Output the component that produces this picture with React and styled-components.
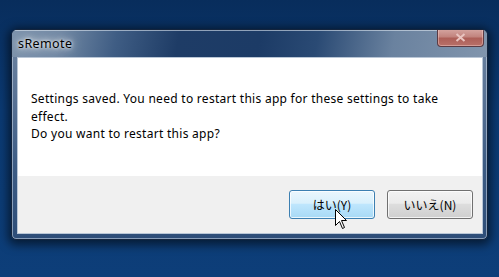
import React from "react";
import styled, { createGlobalStyle } from "styled-components";

const GlobalStyle = createGlobalStyle`
  html, body {
    margin: 0;
    height: 100%;
  }
  body {
    background: linear-gradient(180deg, #082d5c 0%, #0b3a73 40%, #0d3e79 100%);
    font-family: "Noto Sans", "Noto Sans CJK JP", sans-serif;
    overflow: hidden;
  }
  #root {
    padding: 29px 0 0 11px;
  }
`;

const Window = styled.div`
  position: relative;
  width: 477px;
  height: 211px;
  box-sizing: border-box;
  border: 1px solid #13243d;
  border-radius: 6px 6px 5px 5px;
  background: linear-gradient(180deg, #6f86a2 0%, #5b7496 30%, #3d5c84 65%, #2d4d78 100%);
  box-shadow: 0 2px 10px 3px rgba(0, 0, 0, 0.55),
    inset 0 0 0 1px rgba(210, 222, 236, 0.55);
  display: flex;
  flex-direction: column;
  overflow: hidden;
`;

const TitleBar = styled.div`
  height: 27px;
  display: flex;
  justify-content: space-between;
  align-items: flex-start;
  padding-left: 6px;
  background: linear-gradient(
    100deg,
    #7d93ac 0%,
    #7289a4 10%,
    #3f5d84 22%,
    #1e3c66 35%,
    #1c3b66 52%,
    #2a4a74 64%,
    #6a829f 80%,
    #8195ad 100%
  );
  box-shadow: inset 0 1px 0 rgba(220, 230, 240, 0.6);
`;

const Title = styled.span`
  margin-top: 7px;
  font-size: 12.5px;
  letter-spacing: 0.4px;
  line-height: 14px;
  color: #000;
  text-shadow: 0 0 6px rgba(255, 255, 255, 0.95), 0 0 12px rgba(255, 255, 255, 0.8),
    0 0 3px rgba(255, 255, 255, 0.9);
`;

const CloseButton = styled.div`
  width: 47px;
  height: 18px;
  margin: -1px 3px 0 0;
  box-sizing: border-box;
  border: 1px solid #5a3b44;
  border-top: none;
  border-radius: 0 0 4px 4px;
  background: linear-gradient(180deg, #d6a6a2 0%, #c2847e 45%, #ad5f58 55%, #b87069 100%);
  box-shadow: inset 0 0 0 1px rgba(255, 220, 215, 0.4);
  display: flex;
  align-items: center;
  justify-content: center;
`;

const Frame = styled.div`
  flex: 1;
  padding: 0 4px 5px 5px;
  display: flex;
`;

const Client = styled.div`
  flex: 1;
  display: flex;
  flex-direction: column;
  border: 1px solid #b9c6d6;
  background: #fff;
`;

const Message = styled.div`
  flex: 1;
  padding: 32px 0 0 13px;
  font-size: 12px;
  letter-spacing: 0.28px;
  line-height: 17.5px;
  color: #000;
`;

const Footer = styled.div`
  height: 57px;
  box-sizing: border-box;
  background: #f0f0f0;
  display: flex;
  justify-content: flex-end;
  align-items: flex-start;
  gap: 12px;
  padding: 14px 9px 0 0;
`;

const Button = styled.button`
  width: 86px;
  height: 29px;
  border-radius: 3px;
  font-family: "Noto Sans CJK JP", "Noto Sans", sans-serif;
  font-size: 12px;
  color: #000;
  padding: 0;
  border: 1px solid ${(p) => (p.hot ? "#3c7fb1" : "#707070")};
  background: ${(p) =>
    p.hot
      ? "linear-gradient(180deg, #eaf6fd 0%, #d9f0fc 45%, #bee6fd 50%, #a7d9f5 100%)"
      : "linear-gradient(180deg, #f2f2f2 0%, #ebebeb 45%, #dddddd 50%, #cfcfcf 100%)"};
  box-shadow: inset 0 0 0 1px rgba(255, 255, 255, 0.75);
`;

const Cursor = styled.svg`
  position: absolute;
  left: 323px;
  top: 179px;
`;

export default function App() {
  return (
    <>
      <GlobalStyle />
      <Window>
        <TitleBar>
          <Title>sRemote</Title>
          <CloseButton>
            <svg width="11" height="9" viewBox="0 0 11 9">
              <path d="M1.5 1 L9.5 8 M9.5 1 L1.5 8" stroke="#e9c4c0" strokeWidth="2" />
            </svg>
          </CloseButton>
        </TitleBar>
        <Frame>
          <Client>
            <Message>
              Settings saved. You need to restart this app for these settings to take
              <br />
              effect.
              <br />
              Do you want to restart this app?
            </Message>
            <Footer>
              <Button hot>はい(Y)</Button>
              <Button>いいえ(N)</Button>
            </Footer>
          </Client>
        </Frame>
        <Cursor width="13" height="21" viewBox="0 0 13 21">
          <path
            d="M0.5 0.5 L0.5 16.5 L4.5 12.5 L7.5 19.5 L9.5 18.5 L6.5 11.5 L11.5 11.5 Z"
            fill="#fff"
            stroke="#000"
            strokeWidth="1"
          />
        </Cursor>
      </Window>
    </>
  );
}
